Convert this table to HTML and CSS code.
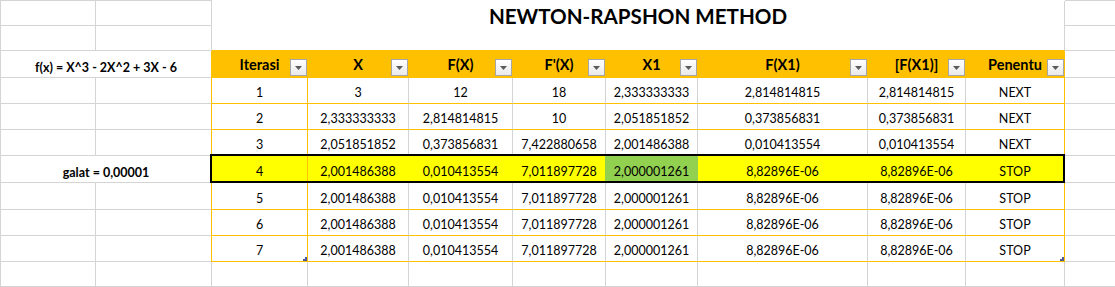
FILE: index.html
```html
<!DOCTYPE html>
<html lang="id">
<head>
<meta charset="utf-8">
<title>Newton-Rapshon Method</title>
<link rel="stylesheet" href="styles.css">
</head>
<body>
<div class="sheet">
  <div class="side side-left">
    <div class="c"></div><div class="c"></div>
    <div class="c"></div><div class="c"></div>
    <div class="c span2 note"><span class="v">f(x) = X^3 - 2X^2 + 3X - 6</span></div>
    <div class="c"></div><div class="c"></div>
    <div class="c"></div><div class="c"></div>
    <div class="c"></div><div class="c"></div>
    <div class="c span2 note"><span class="v">galat = 0,00001</span></div>
    <div class="c"></div><div class="c"></div>
    <div class="c"></div><div class="c"></div>
    <div class="c"></div><div class="c"></div>
    <div class="c"></div><div class="c"></div>
  </div>

  <div class="main">
    <div class="title">NEWTON-RAPSHON METHOD</div>

    <div class="trow thead">
      <div class="th"><span class="ht">Iterasi</span><span class="fbtn"><svg width="7" height="4" viewBox="0 0 7 4"><polygon points="0,0 7,0 3.5,4"/></svg></span></div>
      <div class="th"><span class="ht">X</span><span class="fbtn"><svg width="7" height="4" viewBox="0 0 7 4"><polygon points="0,0 7,0 3.5,4"/></svg></span></div>
      <div class="th"><span class="ht">F(X)</span><span class="fbtn"><svg width="7" height="4" viewBox="0 0 7 4"><polygon points="0,0 7,0 3.5,4"/></svg></span></div>
      <div class="th"><span class="ht">F'(X)</span><span class="fbtn"><svg width="7" height="4" viewBox="0 0 7 4"><polygon points="0,0 7,0 3.5,4"/></svg></span></div>
      <div class="th"><span class="ht">X1</span><span class="fbtn"><svg width="7" height="4" viewBox="0 0 7 4"><polygon points="0,0 7,0 3.5,4"/></svg></span></div>
      <div class="th"><span class="ht">F(X1)</span><span class="fbtn"><svg width="7" height="4" viewBox="0 0 7 4"><polygon points="0,0 7,0 3.5,4"/></svg></span></div>
      <div class="th"><span class="ht">[F(X1)]</span><span class="fbtn"><svg width="7" height="4" viewBox="0 0 7 4"><polygon points="0,0 7,0 3.5,4"/></svg></span></div>
      <div class="th"><span class="ht">Penentu</span><span class="fbtn"><svg width="7" height="4" viewBox="0 0 7 4"><polygon points="0,0 7,0 3.5,4"/></svg></span></div>
    </div>

    <div class="trow r26">
      <div class="td iter"><span class="v">1</span></div>
      <div class="td"><span class="v">3</span></div>
      <div class="td"><span class="v">12</span></div>
      <div class="td"><span class="v">18</span></div>
      <div class="td"><span class="v">2,333333333</span></div>
      <div class="td"><span class="v">2,814814815</span></div>
      <div class="td"><span class="v">2,814814815</span></div>
      <div class="td last"><span class="v">NEXT</span></div>
    </div>
    <div class="trow r26">
      <div class="td iter"><span class="v">2</span></div>
      <div class="td"><span class="v">2,333333333</span></div>
      <div class="td"><span class="v">2,814814815</span></div>
      <div class="td"><span class="v">10</span></div>
      <div class="td"><span class="v">2,051851852</span></div>
      <div class="td"><span class="v">0,373856831</span></div>
      <div class="td"><span class="v">0,373856831</span></div>
      <div class="td last"><span class="v">NEXT</span></div>
    </div>
    <div class="trow r26">
      <div class="td iter"><span class="v">3</span></div>
      <div class="td"><span class="v">2,051851852</span></div>
      <div class="td"><span class="v">0,373856831</span></div>
      <div class="td"><span class="v">7,422880658</span></div>
      <div class="td"><span class="v">2,001486388</span></div>
      <div class="td"><span class="v">0,010413554</span></div>
      <div class="td"><span class="v">0,010413554</span></div>
      <div class="td last"><span class="v">NEXT</span></div>
    </div>
    <div class="trow r27 sel">
      <div class="td iter"><span class="v">4</span></div>
      <div class="td"><span class="v">2,001486388</span></div>
      <div class="td"><span class="v">0,010413554</span></div>
      <div class="td pre-hit"><span class="v">7,011897728</span></div>
      <div class="td hit"><span class="v">2,000001261</span></div>
      <div class="td"><span class="v">8,82896E-06</span></div>
      <div class="td"><span class="v">8,82896E-06</span></div>
      <div class="td last"><span class="v">STOP</span></div>
    </div>
    <div class="trow r27">
      <div class="td iter"><span class="v">5</span></div>
      <div class="td"><span class="v">2,001486388</span></div>
      <div class="td"><span class="v">0,010413554</span></div>
      <div class="td"><span class="v">7,011897728</span></div>
      <div class="td"><span class="v">2,000001261</span></div>
      <div class="td"><span class="v">8,82896E-06</span></div>
      <div class="td"><span class="v">8,82896E-06</span></div>
      <div class="td last"><span class="v">STOP</span></div>
    </div>
    <div class="trow r26">
      <div class="td iter"><span class="v">6</span></div>
      <div class="td"><span class="v">2,001486388</span></div>
      <div class="td"><span class="v">0,010413554</span></div>
      <div class="td"><span class="v">7,011897728</span></div>
      <div class="td"><span class="v">2,000001261</span></div>
      <div class="td"><span class="v">8,82896E-06</span></div>
      <div class="td"><span class="v">8,82896E-06</span></div>
      <div class="td last"><span class="v">STOP</span></div>
    </div>
    <div class="trow r26">
      <div class="td iter"><span class="v">7</span><svg class="handle" width="4" height="4" viewBox="0 0 4 4"><polygon points="2,0 4,0 4,4 0,4 0,2 2,2"/></svg></div>
      <div class="td"><span class="v">2,001486388</span></div>
      <div class="td"><span class="v">0,010413554</span></div>
      <div class="td"><span class="v">7,011897728</span></div>
      <div class="td"><span class="v">2,000001261</span></div>
      <div class="td"><span class="v">8,82896E-06</span></div>
      <div class="td"><span class="v">8,82896E-06</span></div>
      <div class="td last"><span class="v">STOP</span><svg class="handle" width="4" height="4" viewBox="0 0 4 4"><polygon points="2,0 4,0 4,4 0,4 0,2 2,2"/></svg></div>
    </div>

    <div class="trow-blank">
      <div class="c"></div><div class="c"></div><div class="c"></div><div class="c"></div>
      <div class="c"></div><div class="c"></div><div class="c"></div><div class="c"></div>
    </div>
  </div>

  <div class="side side-right">
    <div class="c"></div><div class="c"></div><div class="c"></div><div class="c"></div>
    <div class="c"></div><div class="c"></div><div class="c"></div><div class="c"></div>
    <div class="c"></div><div class="c"></div><div class="c"></div>
  </div>
</div>
</body>
</html>
```

FILE: styles.css
```css
html, body {
  margin: 0;
  padding: 0;
  background: #fff;
}

body {
  width: 1115px;
  height: 287px;
  overflow: hidden;
  font-family: Lato, "Liberation Sans", sans-serif;
  font-size: 12.5px;
  line-height: 15px;
  color: #000;
}

*, *::before, *::after {
  box-sizing: border-box;
}

.sheet {
  display: flex;
  align-items: flex-start;
}

.c {
  border-right: 1px solid #d4d4d4;
  border-bottom: 1px solid #d4d4d4;
}

/* left margin columns A-B */
.side-left {
  flex: none;
  display: grid;
  grid-template-columns: 95px 116px;
  grid-template-rows: 25px 25px 27px 26px 26px 26px 27px 27px 26px 26px 25px;
  border-top: 1px solid #d4d4d4;
  border-left: 1px solid #d4d4d4;
}

.span2 {
  grid-column: span 2;
}

.note {
  display: grid;
  place-items: end center;
  font-weight: bold;
}

.note .v {
  padding-bottom: 2px;
}

/* right margin column K */
.side-right {
  flex: none;
  width: 60px;
  display: grid;
  grid-template-columns: 60px;
  grid-template-rows: 25px 25px 27px 26px 26px 26px 27px 27px 26px 26px 25px;
  border-top: 1px solid #d4d4d4;
}

/* main area columns C-J */
.main {
  flex: none;
  width: 853px;
  display: flex;
  flex-direction: column;
  border-top: 1px solid #fff;
}

.title {
  height: 50px;
  display: flex;
  justify-content: center;
  align-items: flex-start;
  padding-top: 3px;
  font-size: 20.6px;
  line-height: 25px;
  font-weight: bold;
  border-right: 1px solid #d4d4d4;
  border-bottom: 1px solid #ffc000;
}

.trow,
.trow-blank {
  display: grid;
  grid-template-columns: 96px 101px 104px 93px 92px 170px 98px 99px;
}

.trow {
  box-shadow: -1px 0 0 #ffc000;
}

.thead { height: 27px; }
.r26 { height: 26px; }
.r27 { height: 27px; }
.trow-blank { height: 25px; }

/* header cells */
.th {
  display: grid;
  background: #ffc000;
  border-right: 1px solid #ffc000;
  border-bottom: 1px solid #ffc000;
  font-weight: bold;
  font-size: 14.5px;
  line-height: 17px;
}

.th > *,
.td > * {
  grid-area: 1 / 1;
}

.ht {
  align-self: center;
  justify-self: center;
}

.fbtn {
  align-self: end;
  justify-self: end;
  width: 17px;
  height: 17px;
  margin-bottom: 1px;
  display: flex;
  align-items: center;
  justify-content: center;
  padding-top: 1px;
  border: 1px solid #a6a6a6;
  background: linear-gradient(#ffffff, #e9e9ea);
}

.fbtn svg {
  display: block;
  fill: #5b5b5b;
}

/* body cells */
.td {
  display: grid;
  border-right: 1px solid #d4d4d4;
  border-bottom: 1px solid #ffc000;
}

.td .v {
  align-self: end;
  justify-self: center;
  padding-bottom: 3px;
}

.td.iter,
.td.last {
  border-right-color: #ffc000;
}

.handle {
  align-self: end;
  justify-self: end;
  fill: #4a5a9c;
}

/* highlighted stop row */
.sel {
  position: relative;
  background: #ffff00;
}

.sel .td {
  border-right-color: #ffff00;
}

.sel .td.iter {
  border-right-color: #ffc000;
}

.sel .td.pre-hit {
  border-right-color: #92d050;
}

.sel .td.hit {
  background: #92d050;
  border-right-color: #92d050;
}

.sel::after {
  content: "";
  position: absolute;
  top: -2px;
  left: -2px;
  right: 0;
  bottom: 0;
  border: 2px solid #000;
  pointer-events: none;
  z-index: 1;
}
```
